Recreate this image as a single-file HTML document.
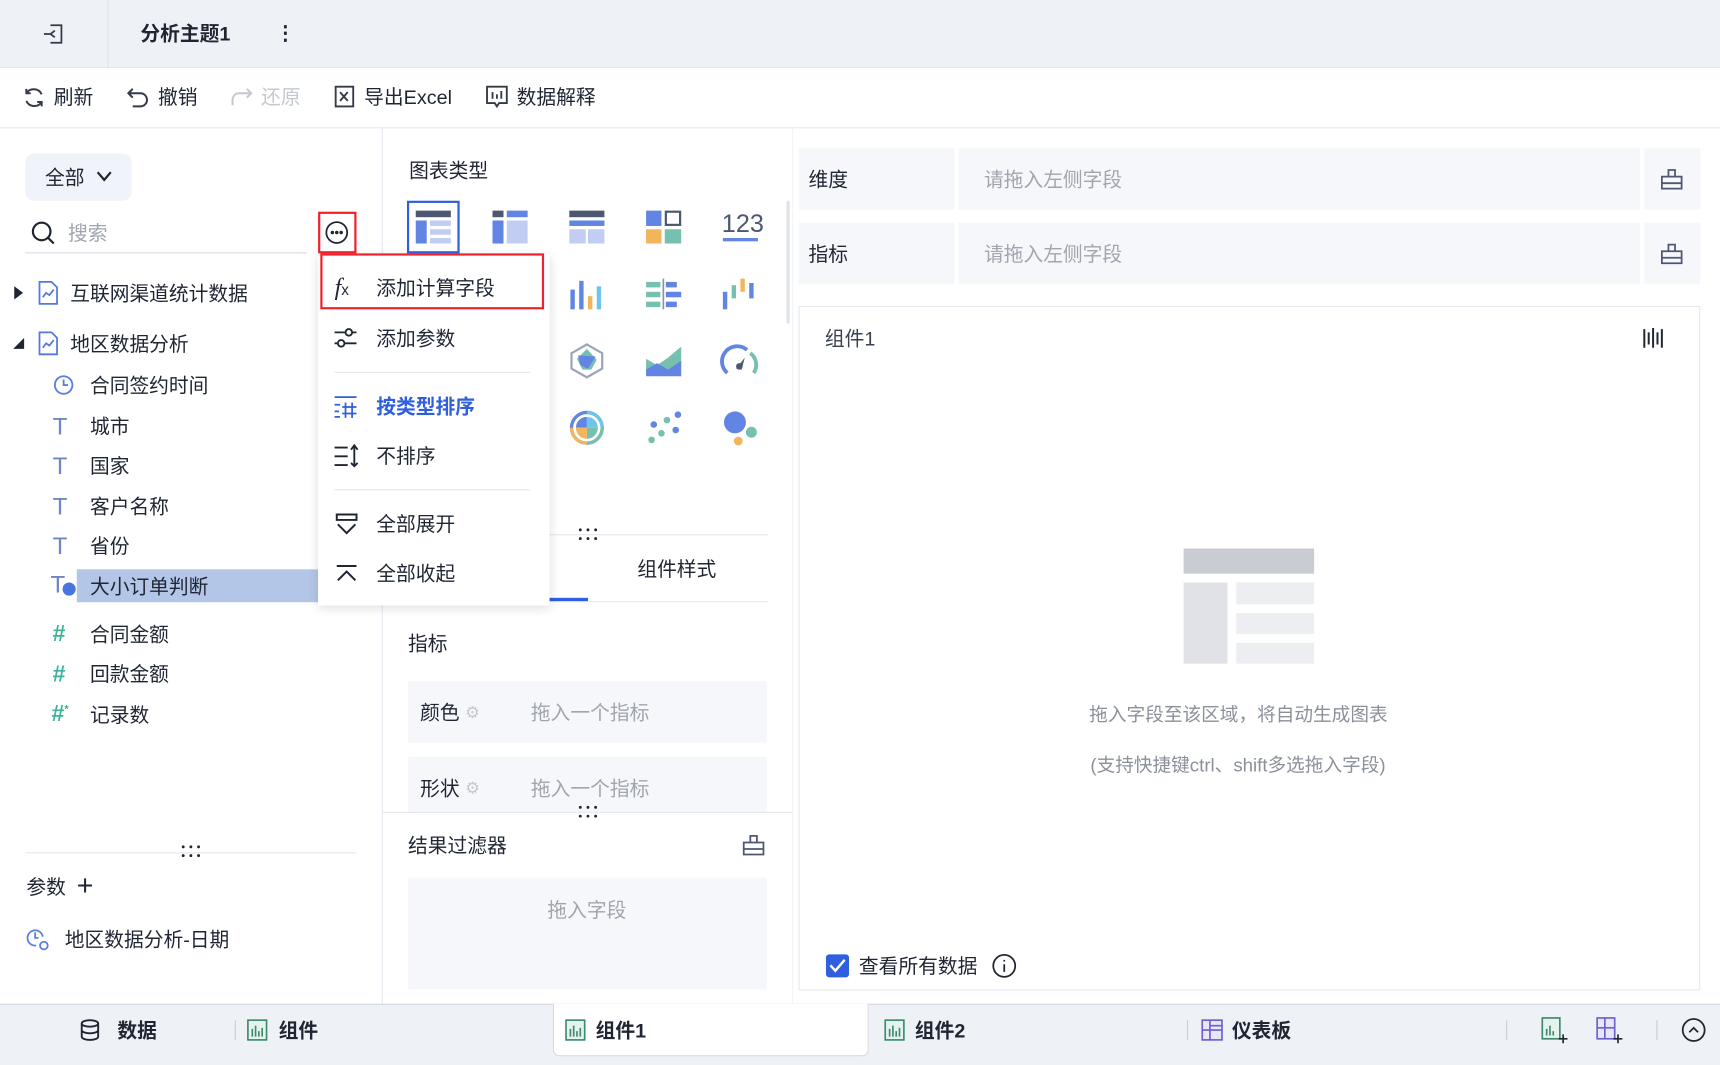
<!DOCTYPE html>
<html><head><meta charset="utf-8">
<style>
*{box-sizing:border-box;margin:0;padding:0}
html,body{width:1720px;height:1065px;overflow:hidden;background:#fff}
#w{position:absolute;left:0;top:0;width:1568px;height:971px;transform:scale(1.09694);transform-origin:0 0;font-family:"Liberation Sans","Noto Sans CJK SC",sans-serif;color:#1f2533;font-size:18px}
.a{position:absolute}
.t{position:absolute;white-space:nowrap;line-height:1;transform:translateY(-50%)}
.g{color:#a0a5ae}
.box{position:absolute;background:#f6f7fb}
svg{position:absolute;overflow:visible}
.dots{position:absolute;width:22px;height:12px;transform:translate(-50%,-50%)}
</style></head><body><div id="w">
<!-- top bar -->
<div class="a" style="left:0;top:0;width:1568px;height:62px;background:#eef1f6;border-bottom:1px solid #e3e6ec"></div>
<div class="a" style="left:98px;top:0;width:1px;height:62px;background:#e0e3ea"></div>
<svg style="left:38px;top:20px" width="22" height="22" viewBox="0 0 22 22" fill="none" stroke="#333a48" stroke-width="1.6"><path d="M8 3h10v16H8M12 8l-4 3 4 3M8 11h-6"/></svg>
<div class="t" style="left:128px;top:31px;font-weight:bold;font-size:18px">分析主题1</div>
<div class="t" style="left:251px;top:30px;font-size:18px;font-weight:bold">⋮</div>
<!-- toolbar -->
<div class="a" style="left:0;top:116px;width:1568px;height:1px;background:#e5e8ef"></div>
<svg style="left:20px;top:78px" width="22" height="22" viewBox="0 0 22 22" fill="none" stroke="#333a48" stroke-width="1.8"><path d="M18 8A8 8 0 0 0 4 7M4 14a8 8 0 0 0 14 1M4 3v4h4M18 19v-4h-4"/></svg>
<div class="t" style="left:49px;top:89px">刷新</div>
<svg style="left:115px;top:78px" width="22" height="22" viewBox="0 0 22 22" fill="none" stroke="#333a48" stroke-width="1.8"><path d="M6 3L2 7l4 4M2 7h11a6 6 0 0 1 0 12H6"/></svg>
<div class="t" style="left:144px;top:89px">撤销</div>
<svg style="left:209px;top:78px" width="22" height="22" viewBox="0 0 22 22" fill="none" stroke="#c4c8d0" stroke-width="1.8"><path d="M16 3l4 4-4 4M20 7H9a6 6 0 0 0-6 6v5"/></svg>
<div class="t" style="left:238px;top:89px;color:#c4c8d0">还原</div>
<svg style="left:303px;top:77px" width="22" height="22" viewBox="0 0 22 22" fill="none" stroke="#333a48" stroke-width="1.7"><path d="M3 2h16v18H3zM7 7l7 8M14 7l-7 8"/></svg>
<div class="t" style="left:332px;top:89px">导出Excel</div>
<svg style="left:442px;top:77px" width="22" height="22" viewBox="0 0 22 22" fill="none" stroke="#333a48" stroke-width="1.7"><path d="M2 2h18v15H13l-2 3-2-3H2zM7 7v6M11 9v4M15 6v7"/></svg>
<div class="t" style="left:471px;top:89px">数据解释</div>
<!-- panels borders -->
<div class="a" style="left:348px;top:117px;width:1px;height:798px;background:#e5e8ef"></div>
<!-- left panel -->
<div class="a" style="left:23px;top:140px;width:97px;height:43px;background:#f0f4fa;border-radius:8px"></div>
<div class="t" style="left:41px;top:162px">全部</div>
<svg style="left:87px;top:155px" width="16" height="12" viewBox="0 0 16 12" fill="none" stroke="#1f2533" stroke-width="2"><path d="M2 2l6 7 6-7"/></svg>
<svg style="left:28px;top:201px" width="24" height="24" viewBox="0 0 24 24" fill="none" stroke="#1f2533" stroke-width="2"><circle cx="10" cy="10" r="8"/><path d="M16 16l5 5"/></svg>
<div class="t g" style="left:62px;top:213px">搜索</div>
<div class="a" style="left:23px;top:230px;width:257px;height:1px;background:#d8dbe1"></div>
<div class="a" style="left:290px;top:193px;width:35px;height:38px;border:2px solid #f0212a"></div>
<svg style="left:296px;top:201px" width="22" height="22" viewBox="0 0 22 22" fill="none" stroke="#1f2533" stroke-width="1.6"><circle cx="11" cy="11" r="9.5"/><circle cx="7" cy="11" r=".8" fill="#1f2533"/><circle cx="11" cy="11" r=".8" fill="#1f2533"/><circle cx="15" cy="11" r=".8" fill="#1f2533"/></svg>
<svg style="left:12px;top:261px" width="10" height="12"><path d="M1 0l8 6-8 6z" fill="#1f2533"/></svg>
<svg style="left:34px;top:256px" width="20" height="22" viewBox="0 0 20 22" fill="none" stroke="#5577e0" stroke-width="1.6"><path d="M2 1h11l5 5v15H2zM5 15l3-4 3 2 4-5"/></svg>
<div class="t" style="left:64px;top:268px">互联网渠道统计数据</div>
<svg style="left:12px;top:308px" width="10" height="10"><path d="M10 0v10H0z" fill="#1f2533"/></svg>
<svg style="left:34px;top:302px" width="20" height="22" viewBox="0 0 20 22" fill="none" stroke="#5577e0" stroke-width="1.6"><path d="M2 1h11l5 5v15H2zM5 15l3-4 3 2 4-5"/></svg>
<div class="t" style="left:64px;top:314px">地区数据分析</div>
<svg style="left:48px;top:341px" width="20" height="20" viewBox="0 0 20 20" fill="none" stroke="#5b7fe0" stroke-width="1.7"><circle cx="10" cy="10" r="8"/><path d="M10 5v5h4"/></svg>
<div class="t" style="left:82px;top:352px">合同签约时间</div>
<div class="a" style="left:70px;top:519px;width:220px;height:30px;background:#b3c6e8"></div>
<div class="t" style="left:48px;top:389px;color:#6f86c4;font-size:22px">T</div><div class="t" style="left:82px;top:389px">城市</div>
<div class="t" style="left:48px;top:425px;color:#6f86c4;font-size:22px">T</div><div class="t" style="left:82px;top:425px">国家</div>
<div class="t" style="left:48px;top:462px;color:#6f86c4;font-size:22px">T</div><div class="t" style="left:82px;top:462px">客户名称</div>
<div class="t" style="left:48px;top:498px;color:#6f86c4;font-size:22px">T</div><div class="t" style="left:82px;top:498px">省份</div>
<div class="t" style="left:46px;top:533px;color:#6f86c4;font-size:22px">T</div>
<div class="a" style="left:57px;top:531px;width:12px;height:12px;border-radius:50%;background:#4a74e0"></div>
<div class="t" style="left:82px;top:535px">大小订单判断</div>
<div class="t" style="left:48px;top:578px;color:#3cb39b;font-size:21px;font-weight:bold">#</div><div class="t" style="left:82px;top:579px">合同金额</div>
<div class="t" style="left:48px;top:615px;color:#3cb39b;font-size:21px;font-weight:bold">#</div><div class="t" style="left:82px;top:615px">回款金额</div>
<div class="t" style="left:47px;top:651px;color:#3cb39b;font-size:21px;font-weight:bold">#<sup style="font-size:10px">*</sup></div><div class="t" style="left:82px;top:652px">记录数</div>
<div class="a" style="left:23px;top:777px;width:302px;height:1px;background:#e3e6ec"></div>
<svg class="dots" style="left:174px;top:776px" viewBox="0 0 22 12"><g fill="#1f2533"><circle cx="4" cy="2" r="1.3"/><circle cx="11" cy="2" r="1.3"/><circle cx="18" cy="2" r="1.3"/><circle cx="4" cy="10" r="1.3"/><circle cx="11" cy="10" r="1.3"/><circle cx="18" cy="10" r="1.3"/></g></svg>
<div class="t" style="left:24px;top:809px">参数</div>
<div class="t" style="left:70px;top:807px;font-size:26px;font-weight:300">+</div>
<svg style="left:23px;top:845px" width="24" height="24" viewBox="0 0 24 24" fill="none" stroke="#5b7fe0" stroke-width="1.6"><path d="M16 9A7 7 0 1 0 10 17"/><path d="M9 5v5h3"/><circle cx="17" cy="17" r="3.5"/></svg>
<div class="t" style="left:59px;top:857px">地区数据分析-日期</div>
<!-- middle -->
<div class="t" style="left:373px;top:156px">图表类型</div>
<div class="a" style="left:717px;top:183px;width:3px;height:112px;background:#e1e4ea;border-radius:2px"></div>
<div class="a" style="left:371px;top:183px;width:48px;height:48px;border:2.5px solid #2f5fde"></div>
<svg style="left:379px;top:192px" width="32" height="30"><rect x="0" y="0" width="32" height="6" fill="#4d5770"/><rect x="0" y="9" width="10" height="21" fill="#6284e3"/><rect x="13" y="9" width="19" height="5" fill="#c2cdf3"/><rect x="13" y="17" width="19" height="5" fill="#c2cdf3"/><rect x="13" y="25" width="19" height="5" fill="#c2cdf3"/></svg>
<svg style="left:449px;top:192px" width="32" height="30"><rect x="0" y="0" width="10" height="6" fill="#4d5770"/><rect x="13" y="0" width="19" height="6" fill="#6284e3"/><rect x="0" y="9" width="10" height="21" fill="#6284e3"/><rect x="13" y="9" width="19" height="21" fill="#c2cdf3"/></svg>
<svg style="left:519px;top:192px" width="32" height="30"><rect x="0" y="0" width="32" height="6" fill="#4d5770"/><rect x="0" y="9" width="32" height="5" fill="#6284e3"/><rect x="0" y="17" width="15" height="13" fill="#c2cdf3"/><rect x="17" y="17" width="15" height="13" fill="#c2cdf3"/></svg>
<svg style="left:589px;top:192px" width="32" height="30"><rect x="0" y="0" width="14" height="14" fill="#6284e3"/><rect x="18" y="1" width="13" height="12" fill="none" stroke="#4d5770" stroke-width="2"/><rect x="0" y="17" width="14" height="13" fill="#f2b55c"/><rect x="17" y="17" width="15" height="13" fill="#76c0b0"/></svg>
<div class="t" style="left:658px;top:204px;font-size:23px;color:#4d5770">123</div>
<div class="a" style="left:659px;top:217px;width:32px;height:3px;background:#6284e3"></div>
<svg style="left:519px;top:254px" width="32" height="28"><rect x="1" y="10" width="4" height="18" fill="#6284e3"/><rect x="9" y="2" width="4" height="26" fill="#6284e3"/><rect x="17" y="16" width="4" height="12" fill="#f2b55c"/><rect x="25" y="7" width="4" height="21" fill="#6ec5e9"/></svg>
<svg style="left:589px;top:254px" width="32" height="28"><rect x="0" y="3" width="13" height="5" fill="#76c0b0"/><rect x="0" y="12" width="13" height="5" fill="#76c0b0"/><rect x="0" y="21" width="13" height="5" fill="#76c0b0"/><rect x="15" y="0" width="1.5" height="28" fill="#8a93a6"/><rect x="18" y="3" width="10" height="5" fill="#6284e3"/><rect x="18" y="12" width="14" height="5" fill="#6284e3"/><rect x="18" y="21" width="10" height="5" fill="#6284e3"/></svg>
<svg style="left:659px;top:254px" width="32" height="28"><rect x="0" y="12" width="4" height="16" fill="#6284e3"/><rect x="8" y="6" width="4" height="12" fill="#76c0b0"/><rect x="16" y="0" width="4" height="12" fill="#f2b55c"/><rect x="24" y="4" width="4" height="14" fill="#6284e3"/></svg>
<svg style="left:519px;top:313px" width="32" height="32"><path d="M16 1l14 8v14l-14 8-14-8V9z" fill="none" stroke="#9aa3b8" stroke-width="2"/><path d="M16 5l9 10-5 9H12L7 14z" fill="#76c0b0"/><path d="M8 11l16 1-7 11-7-3z" fill="#6284e3"/></svg>
<svg style="left:589px;top:315px" width="32" height="28"><path d="M0 12l10 6 10-7 12-10v18l-12 8-10-6-10 6z" fill="#76c0b0"/><path d="M0 22l10-6 10 6 12-8v14H0z" fill="#6284e3"/></svg>
<svg style="left:659px;top:314px" width="32" height="30"><path d="M4 26A13 13 0 0 1 22 5" fill="none" stroke="#6284e3" stroke-width="3.5"/><path d="M25 8A13 13 0 0 1 28 26" fill="none" stroke="#76c0b0" stroke-width="3.5"/><path d="M12 22l8-10-3 11z" fill="#4d5770"/><circle cx="15" cy="20" r="3" fill="#4d5770"/></svg>
<svg style="left:519px;top:374px" width="32" height="32"><circle cx="16" cy="16" r="14" fill="none" stroke-width="3" stroke="#6284e3"/><path d="M16 2a14 14 0 0 1 14 14" fill="none" stroke="#6ec5e9" stroke-width="3"/><path d="M30 16a14 14 0 0 1-14 14" fill="none" stroke="#76c0b0" stroke-width="3"/><path d="M16 30A14 14 0 0 1 2 16" fill="none" stroke="#f2b55c" stroke-width="3"/><path d="M16 6a10 10 0 0 0-10 10h10z" fill="#6284e3"/><path d="M16 6a10 10 0 0 1 10 10H16z" fill="#6ec5e9"/><path d="M26 16a10 10 0 0 1-10 10V16z" fill="#76c0b0"/><path d="M16 26A10 10 0 0 1 6 16h10z" fill="#f2b55c"/></svg>
<svg style="left:589px;top:374px" width="32" height="32"><circle cx="29" cy="4" r="3" fill="#6284e3"/><circle cx="19" cy="9" r="3" fill="#76c0b0"/><circle cx="7" cy="13" r="3" fill="#6284e3"/><circle cx="27" cy="18" r="3" fill="#6284e3"/><circle cx="14" cy="21" r="3" fill="#76c0b0"/><circle cx="5" cy="27" r="3" fill="#76c0b0"/></svg>
<svg style="left:659px;top:374px" width="32" height="32"><circle cx="11" cy="11" r="10" fill="#6284e3"/><circle cx="26" cy="20" r="5" fill="#76c0b0"/><circle cx="14" cy="28" r="4" fill="#f2b55c"/></svg>
<svg class="dots" style="left:536px;top:487px" viewBox="0 0 22 12"><g fill="#1f2533"><circle cx="4" cy="2" r="1.3"/><circle cx="11" cy="2" r="1.3"/><circle cx="18" cy="2" r="1.3"/><circle cx="4" cy="10" r="1.3"/><circle cx="11" cy="10" r="1.3"/><circle cx="18" cy="10" r="1.3"/></g></svg>
<div class="a" style="left:500px;top:487px;width:200px;height:1px;background:#e3e6ec"></div>
<div class="a" style="left:500px;top:548px;width:200px;height:1px;background:#e3e6ec"></div>
<div class="a" style="left:500px;top:545px;width:36px;height:3px;background:#2f5fde"></div>
<div class="t" style="left:581px;top:519px">组件样式</div>
<div class="t" style="left:372px;top:587px">指标</div>
<div class="box" style="left:372px;top:621px;width:327px;height:56px"></div>
<div class="t" style="left:383px;top:650px">颜色</div><div class="t" style="left:424px;top:650px;color:#c4c8d0;font-size:15px">⚙</div>
<div class="t g" style="left:484px;top:650px">拖入一个指标</div>
<div class="box" style="left:372px;top:690px;width:327px;height:50px"></div>
<div class="t" style="left:383px;top:719px">形状</div><div class="t" style="left:424px;top:719px;color:#c4c8d0;font-size:15px">⚙</div>
<div class="t g" style="left:484px;top:719px">拖入一个指标</div>
<div class="a" style="left:349px;top:740px;width:373px;height:1px;background:#e3e6ec"></div>
<svg class="dots" style="left:536px;top:740px" viewBox="0 0 22 12"><g fill="#1f2533"><circle cx="4" cy="2" r="1.3"/><circle cx="11" cy="2" r="1.3"/><circle cx="18" cy="2" r="1.3"/><circle cx="4" cy="10" r="1.3"/><circle cx="11" cy="10" r="1.3"/><circle cx="18" cy="10" r="1.3"/></g></svg>
<div class="t" style="left:372px;top:771px">结果过滤器</div>
<svg style="left:677px;top:760px" width="20" height="20" viewBox="0 0 20 20" fill="none" stroke="#4d5770" stroke-width="1.6"><path d="M1 8h18v11H1zM7 8V2h6v6M1 14h18"/></svg>
<div class="box" style="left:372px;top:800px;width:327px;height:102px"></div>
<div class="t g" style="left:499px;top:830px">拖入字段</div>
<!-- right -->
<div class="a" style="left:722px;top:117px;width:1px;height:798px;background:#f3f4f7"></div>
<div class="box" style="left:728px;top:135px;width:142px;height:56px"></div>
<div class="box" style="left:874px;top:135px;width:621px;height:56px"></div>
<div class="box" style="left:1499px;top:135px;width:51px;height:56px"></div>
<div class="t" style="left:737px;top:164px">维度</div>
<div class="t g" style="left:897px;top:164px">请拖入左侧字段</div>
<div class="box" style="left:728px;top:203px;width:142px;height:56px"></div>
<div class="box" style="left:874px;top:203px;width:621px;height:56px"></div>
<div class="box" style="left:1499px;top:203px;width:51px;height:56px"></div>
<div class="t" style="left:737px;top:232px">指标</div>
<div class="t g" style="left:897px;top:232px">请拖入左侧字段</div>
<svg style="left:1514px;top:153px" width="20" height="20" viewBox="0 0 20 20" fill="none" stroke="#4d5770" stroke-width="1.6"><path d="M1 8h18v11H1zM7 8V2h6v6M1 14h18"/></svg>
<svg style="left:1514px;top:221px" width="20" height="20" viewBox="0 0 20 20" fill="none" stroke="#4d5770" stroke-width="1.6"><path d="M1 8h18v11H1zM7 8V2h6v6M1 14h18"/></svg>
<div class="a" style="left:728px;top:279px;width:822px;height:624px;border:1px solid #e5e8ef"></div>
<div class="t" style="left:752px;top:309px;color:#3a4150">组件1</div>
<svg style="left:1497px;top:298px" width="20" height="20" viewBox="0 0 20 20" stroke="#1f2533" stroke-width="1.8"><path d="M2 2v17M6 5v11M10 1v18M14 5v11M18 2v17"/></svg>
<div class="a" style="left:1079px;top:500px;width:119px;height:23px;background:#c9ccd3"></div>
<div class="a" style="left:1079px;top:531px;width:40px;height:74px;background:#e0e2e7"></div>
<div class="a" style="left:1127px;top:531px;width:71px;height:20px;background:#eceef2"></div>
<div class="a" style="left:1127px;top:559px;width:71px;height:19px;background:#eceef2"></div>
<div class="a" style="left:1127px;top:586px;width:71px;height:19px;background:#eceef2"></div>
<div class="t" style="left:993px;top:652px;color:#8b909a;font-size:17px">拖入字段至该区域，将自动生成图表</div>
<div class="t" style="left:994px;top:698px;color:#8b909a;font-size:17px">(支持快捷键ctrl、shift多选拖入字段)</div>
<div class="a" style="left:753px;top:870px;width:21px;height:21px;background:#2f5fde;border-radius:3px"></div>
<svg style="left:756px;top:874px" width="15" height="13"><path d="M1 6l4.5 5L14 1" fill="none" stroke="#fff" stroke-width="2.2"/></svg>
<div class="t" style="left:783px;top:881px">查看所有数据</div>
<svg style="left:904px;top:869px" width="23" height="23" viewBox="0 0 23 23" fill="none" stroke="#1f2533" stroke-width="1.6"><circle cx="11.5" cy="11.5" r="10"/><path d="M11.5 10v7M11.5 6v1.5"/></svg>
<!-- menu -->
<div class="a" style="left:290px;top:232px;width:211px;height:320px;background:#fff;box-shadow:0 2px 10px rgba(0,0,0,.13);border-radius:2px"></div>
<div class="a" style="left:292px;top:231px;width:204px;height:51px;border:2.5px solid #f0212a"></div>
<div class="t" style="left:305px;top:262px;font-family:'Liberation Serif',serif;font-style:italic;font-size:22px">f<span style="font-size:14px;font-style:normal;font-family:'Liberation Sans'">x</span></div>
<div class="t" style="left:343px;top:263px">添加计算字段</div>
<svg style="left:304px;top:298px" width="22" height="20" viewBox="0 0 22 20" fill="none" stroke="#1f2533" stroke-width="1.7"><path d="M1 5h20M1 15h20"/><circle cx="14" cy="5" r="3" fill="#fff"/><circle cx="7" cy="15" r="3" fill="#fff"/></svg>
<div class="t" style="left:343px;top:309px">添加参数</div>
<div class="a" style="left:305px;top:339px;width:178px;height:1px;background:#e3e6ec"></div>
<svg style="left:304px;top:360px" width="24" height="22" viewBox="0 0 24 22" fill="none" stroke="#2f5fde" stroke-width="1.6"><path d="M1 2h20M1 9h5M1 15h4M1 20h5M11 7v14M17 7v14M8 11h13M8 17h13"/></svg>
<div class="t" style="left:343px;top:371px;color:#2f5fde;font-weight:bold">按类型排序</div>
<svg style="left:304px;top:405px" width="24" height="22" viewBox="0 0 24 22" fill="none" stroke="#1f2533" stroke-width="1.7"><path d="M1 3h12M1 11h12M1 19h12M19 1v19M16 17l3 3 3-3M16 5l3-4 3 4"/></svg>
<div class="t" style="left:343px;top:416px">不排序</div>
<div class="a" style="left:305px;top:446px;width:178px;height:1px;background:#e3e6ec"></div>
<svg style="left:305px;top:467px" width="22" height="22" viewBox="0 0 22 22" fill="none" stroke="#1f2533" stroke-width="1.8"><path d="M2 2h18v5H2zM3 11l8 8 8-8"/></svg>
<div class="t" style="left:343px;top:478px">全部展开</div>
<svg style="left:305px;top:513px" width="22" height="20" viewBox="0 0 22 20" fill="none" stroke="#1f2533" stroke-width="1.8"><path d="M2 3h18M3 16l8-8 8 8"/></svg>
<div class="t" style="left:343px;top:523px">全部收起</div>
<!-- bottom bar -->
<div class="a" style="left:0;top:915px;width:1568px;height:56px;background:#eef1f6;border-top:1px solid #d5d9e0"></div>
<div class="a" style="left:504px;top:915px;width:288px;height:48px;background:#fff;border:1px solid #d5d9e0;border-top:none;border-radius:0 0 6px 6px"></div>
<svg style="left:73px;top:929px" width="18" height="20" viewBox="0 0 18 20" fill="none" stroke="#1f2533" stroke-width="1.7"><ellipse cx="9" cy="4" rx="7.5" ry="3"/><path d="M1.5 4v12c0 1.7 3.4 3 7.5 3s7.5-1.3 7.5-3V4M1.5 10c0 1.7 3.4 3 7.5 3s7.5-1.3 7.5-3"/></svg>
<div class="t" style="left:107px;top:940px;font-weight:bold">数据</div>
<div class="a" style="left:214px;top:930px;width:1px;height:18px;background:#c9cdd5"></div>
<svg style="left:225px;top:929px" width="19" height="20" viewBox="0 0 19 20" fill="none" stroke="#3d8a6e" stroke-width="1.5"><rect x="1" y="1" width="17" height="18" fill="#e6f2ee"/><path d="M5 16V9M8 16V6M11 16v-5M14 16V8"/></svg>
<div class="t" style="left:254px;top:940px;font-weight:bold">组件</div>
<svg style="left:515px;top:929px" width="19" height="20" viewBox="0 0 19 20" fill="none" stroke="#3d8a6e" stroke-width="1.5"><rect x="1" y="1" width="17" height="18" fill="#e6f2ee"/><path d="M5 16V9M8 16V6M11 16v-5M14 16V8"/></svg>
<div class="t" style="left:543px;top:940px;font-weight:bold">组件1</div>
<svg style="left:806px;top:929px" width="19" height="20" viewBox="0 0 19 20" fill="none" stroke="#3d8a6e" stroke-width="1.5"><rect x="1" y="1" width="17" height="18" fill="#e6f2ee"/><path d="M5 16V9M8 16V6M11 16v-5M14 16V8"/></svg>
<div class="t" style="left:834px;top:940px;font-weight:bold">组件2</div>
<div class="a" style="left:1082px;top:930px;width:1px;height:18px;background:#c9cdd5"></div>
<svg style="left:1095px;top:929px" width="20" height="20" viewBox="0 0 20 20" fill="#e8e6fa" stroke="#6c5fd0" stroke-width="1.5"><rect x="1" y="1" width="18" height="18"/><path d="M8 1v18M1 10h18M8 6h11"/></svg>
<div class="t" style="left:1123px;top:940px;font-weight:bold">仪表板</div>
<div class="a" style="left:1373px;top:930px;width:1px;height:18px;background:#c9cdd5"></div>
<svg style="left:1405px;top:927px" width="24" height="24" viewBox="0 0 24 24" fill="none" stroke="#3d8a6e" stroke-width="1.5"><rect x="1" y="1" width="16" height="19" fill="#e6f2ee"/><path d="M5 17v-6M8 17V8M11 17v-4"/><path d="M20 16v8M16 20h8" stroke="#1f2533"/></svg>
<svg style="left:1455px;top:927px" width="24" height="24" viewBox="0 0 24 24" fill="#e8e6fa" stroke="#6c5fd0" stroke-width="1.5"><rect x="1" y="1" width="16" height="19"/><path d="M8 1v19M1 10h16"/><path d="M20 16v8M16 20h8" stroke="#1f2533"/></svg>
<div class="a" style="left:1510px;top:930px;width:1px;height:18px;background:#c9cdd5"></div>
<svg style="left:1533px;top:928px" width="22" height="22" viewBox="0 0 22 22" fill="none" stroke="#1f2533" stroke-width="1.6"><circle cx="11" cy="11" r="10"/><path d="M7 13l4-4 4 4"/></svg>
</div></body></html>
